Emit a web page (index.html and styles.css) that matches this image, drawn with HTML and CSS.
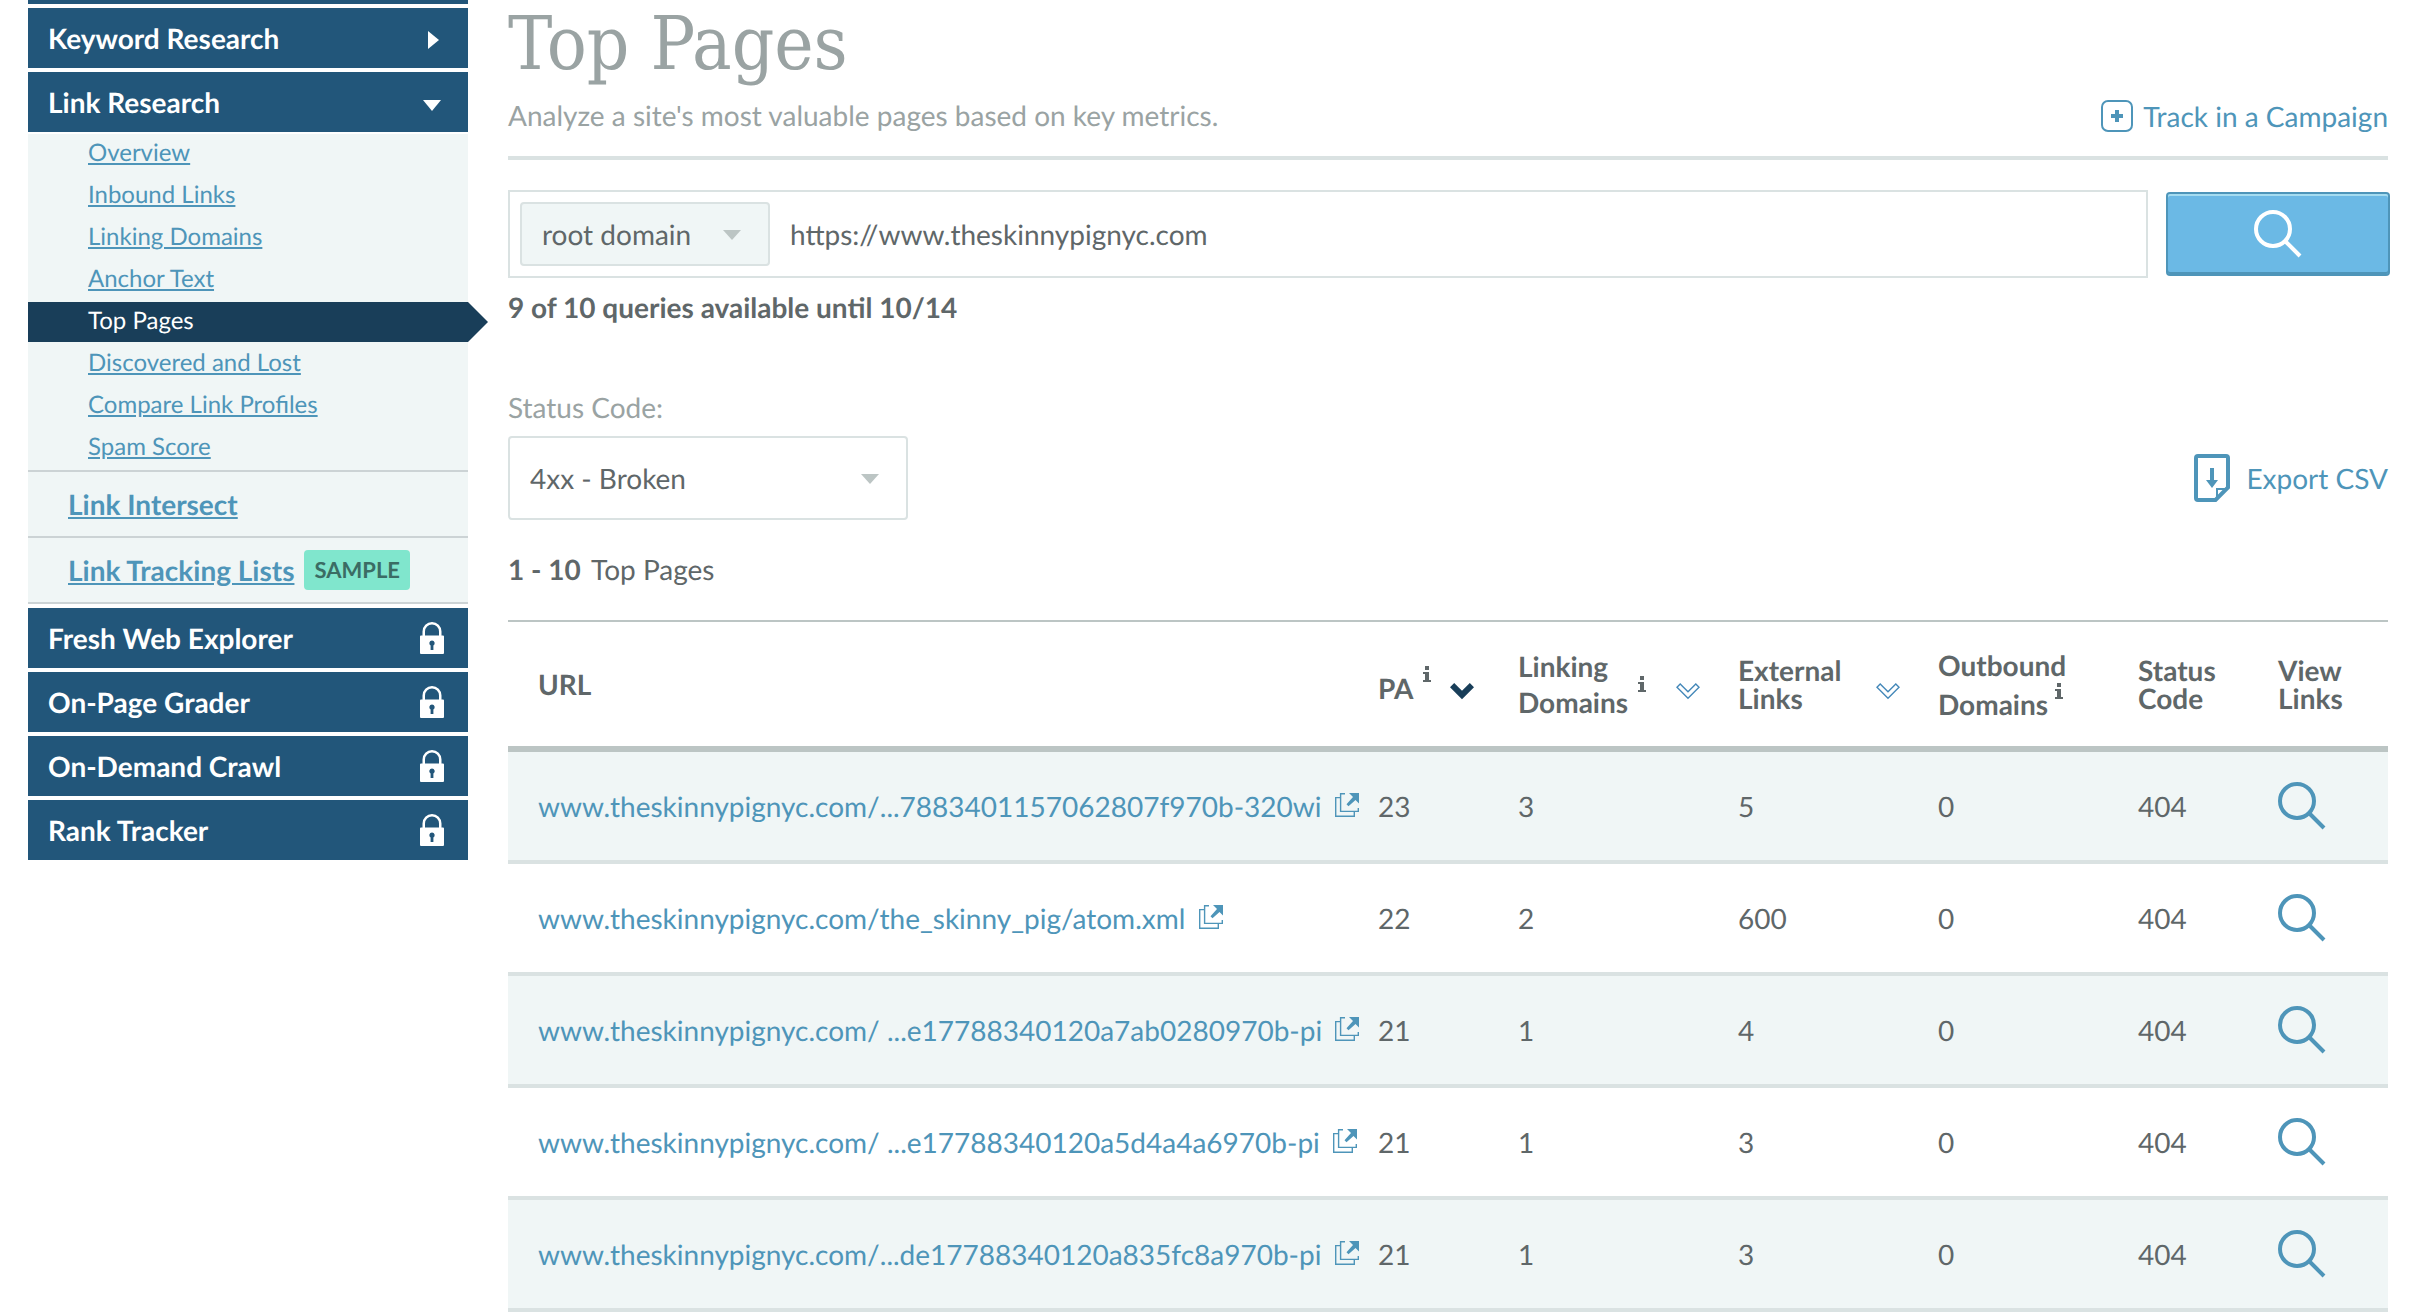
FILE: index.html
```
<!DOCTYPE html>
<html lang="en">
<head>
  <title>Top Pages</title>
  <meta charset="UTF-8">
  <link rel="stylesheet" href="styles.css">
</head>
<body>
<!-- icons shared by the page -->
<svg class="sprite" aria-hidden="true">
  <symbol id="lock" viewBox="0 0 24 32">
    <path fill-rule="evenodd" d="M1 13.500H2.500V9.500a9.500 9.500 0 0 1 19 0v4H23a1 1 0 0 1 1 1V31a1 1 0 0 1-1 1H1a1 1 0 0 1-1-1V14.500a1 1 0 0 1 1-1zM5 13.500h14V9.500a7 7 0 0 0-14 0zM12 18.500a2.700 2.700 0 0 0-1.400 5V28h2.800v-4.500a2.700 2.700 0 0 0-1.400-5z" fill="currentColor"/>
  </symbol>
  <symbol id="search" viewBox="0 0 48 48">
    <circle cx="19" cy="19" r="17" fill="none" stroke="currentColor" stroke-width="4"/>
    <path d="M31 31l15 15" stroke="currentColor" stroke-width="4"/>
  </symbol>
  <symbol id="external" viewBox="0 0 24 24">
    <path d="M5 4.600H.7v18.700h18.600V19M10 .7H5.600v17.700h17.700V15" fill="none" stroke="currentColor" stroke-width="1.400"/>
    <path d="M14 0h10v10.500l-3.500-3.500-7 6.200-2-2 6.500-7.200z" fill="currentColor"/>
  </symbol>
  <symbol id="info" viewBox="0 0 8 16">
    <path d="M2 0h4v4H2zM0 6h6v8h2v2H0v-2h2V8H0z" fill="currentColor"/>
  </symbol>
  <symbol id="chevron" viewBox="0 0 24 17">
    <path d="M1 4.200l3.200-3.200 7.800 7.800 7.800-7.800 3.200 3.200-11 11z" stroke="currentColor" stroke-width="1.400"/>
  </symbol>
</svg>

<div class="page">
  <nav class="sidebar">
    <div class="nav-stub"></div>
    <a class="nav-head" href="#">Keyword Research <span class="arrow-right"></span></a>
    <a class="nav-head nav-open" href="#">Link Research <span class="arrow-down"></span></a>
    <ul class="submenu">
      <li><a href="#">Overview</a></li>
      <li><a href="#">Inbound Links</a></li>
      <li><a href="#">Linking Domains</a></li>
      <li><a href="#">Anchor Text</a></li>
      <li class="current"><a href="#">Top Pages</a></li>
      <li><a href="#">Discovered and Lost</a></li>
      <li><a href="#">Compare Link Profiles</a></li>
      <li><a href="#">Spam Score</a></li>
    </ul>
    <div class="nav-sub"><a href="#">Link Intersect</a></div>
    <div class="nav-sub nav-last"><a href="#">Link Tracking Lists</a><span class="badge">SAMPLE</span></div>
    <a class="nav-head" href="#">Fresh Web Explorer <svg class="lock"><use href="#lock"/></svg></a>
    <a class="nav-head" href="#">On-Page Grader <svg class="lock"><use href="#lock"/></svg></a>
    <a class="nav-head" href="#">On-Demand Crawl <svg class="lock"><use href="#lock"/></svg></a>
    <a class="nav-head" href="#">Rank Tracker <svg class="lock"><use href="#lock"/></svg></a>
  </nav>

  <main class="main">
    <h1>Top Pages</h1>
    <div class="intro">
      <p>Analyze a site's most valuable pages based on key metrics.</p>
      <a class="track" href="#">
        <svg class="plus" viewBox="0 0 32 32">
          <rect x="1" y="1" width="30" height="30" rx="6" fill="none" stroke="currentColor" stroke-width="2"/>
          <path d="M14 10h4v4h4v4h-4v4h-4v-4h-4v-4h4z" fill="currentColor"/>
        </svg>
        Track in a Campaign
      </a>
    </div>

    <form class="search">
      <div class="search-box">
        <div class="select scope">
          <select aria-label="Scope"><option>root domain</option></select>
        </div>
        <input type="text" aria-label="Site" value="https://www.theskinnypignyc.com">
      </div>
      <button type="button" aria-label="Search"><svg class="glass"><use href="#search"/></svg></button>
    </form>
    <p class="queries">9 of 10 queries available until 10/14</p>

    <label class="status-label" for="status">Status Code:</label>
    <div class="filters">
      <div class="select status">
        <select id="status"><option>4xx - Broken</option></select>
      </div>
      <a class="export" href="#">
        <svg class="file" viewBox="0 0 36 48">
          <path d="M4 2h28a2 2 0 0 1 2 2v29.500L21.500 46H4a2 2 0 0 1-2-2V4a2 2 0 0 1 2-2z" fill="none" stroke="currentColor" stroke-width="4"/>
          <path d="M16 14h4v12h4l-6 8-6-8h4z" fill="currentColor"/>
          <path d="M23 44v-9h10" fill="none" stroke="currentColor" stroke-width="2"/>
        </svg>
        Export CSV
      </a>
    </div>
    <p class="count"><b>1 - 10</b> Top Pages</p>

    <table>
      <thead>
        <tr>
          <th class="col-url">URL</th>
          <th class="col-pa"><span class="th">PA <svg class="info"><use href="#info"/></svg><svg class="chevron sorted"><use href="#chevron"/></svg></span></th>
          <th class="col-linking"><span class="th"><span class="loose">Linking<br>Domains</span> <svg class="info low"><use href="#info"/></svg><svg class="chevron"><use href="#chevron"/></svg></span></th>
          <th class="col-external"><span class="th">External<br>Links <svg class="chevron"><use href="#chevron"/></svg></span></th>
          <th class="col-outbound"><span class="loose">Outbound<br>Domains <svg class="info"><use href="#info"/></svg></span></th>
          <th class="col-status">Status<br>Code</th>
          <th class="col-view">View<br>Links</th>
        </tr>
      </thead>
      <tbody>
        <tr>
          <td><a href="#">www.theskinnypignyc.com/...7883401157062807f970b-320wi <svg class="external"><use href="#external"/></svg></a></td>
          <td>23</td><td>3</td><td>5</td><td>0</td><td>404</td>
          <td><a href="#" aria-label="View links"><svg class="glass"><use href="#search"/></svg></a></td>
        </tr>
        <tr>
          <td><a href="#">www.theskinnypignyc.com/the_skinny_pig/atom.xml <svg class="external"><use href="#external"/></svg></a></td>
          <td>22</td><td>2</td><td>600</td><td>0</td><td>404</td>
          <td><a href="#" aria-label="View links"><svg class="glass"><use href="#search"/></svg></a></td>
        </tr>
        <tr>
          <td><a href="#">www.theskinnypignyc.com/ ...e17788340120a7ab0280970b-pi <svg class="external"><use href="#external"/></svg></a></td>
          <td>21</td><td>1</td><td>4</td><td>0</td><td>404</td>
          <td><a href="#" aria-label="View links"><svg class="glass"><use href="#search"/></svg></a></td>
        </tr>
        <tr>
          <td><a href="#">www.theskinnypignyc.com/ ...e17788340120a5d4a4a6970b-pi <svg class="external"><use href="#external"/></svg></a></td>
          <td>21</td><td>1</td><td>3</td><td>0</td><td>404</td>
          <td><a href="#" aria-label="View links"><svg class="glass"><use href="#search"/></svg></a></td>
        </tr>
        <tr>
          <td><a href="#">www.theskinnypignyc.com/...de17788340120a835fc8a970b-pi <svg class="external"><use href="#external"/></svg></a></td>
          <td>21</td><td>1</td><td>3</td><td>0</td><td>404</td>
          <td><a href="#" aria-label="View links"><svg class="glass"><use href="#search"/></svg></a></td>
        </tr>
      </tbody>
    </table>
  </main>
</div>
</body>
</html>
```
FILE: styles.css
```
:root {
  --blue: #4e95b9;
  --navy: #22567a;
  --text: #5f6769;
  --muted: #9aa3a3;
  --line: #dae2e2;
  --line-dark: #bcc5c4;
  --pale: #f0f6f6;
}

* {
  box-sizing: border-box;
}

body {
  margin: 0;
  font-family: Lato, sans-serif;
  font-size: 28px;
  line-height: 38px;
  color: var(--text);
  text-rendering: geometricPrecision;
}

a {
  color: var(--blue);
  text-decoration: none;
}

p,
h1 {
  margin: 0;
}

svg {
  flex: none;
}

.sprite {
  position: absolute;
  width: 0;
  height: 0;
}

.page {
  display: grid;
  grid-template-columns: 440px 1fr;
  gap: 40px;
  padding: 0 30px 0 28px;
}

/* sidebar */

.nav-stub {
  height: 4px;
  margin-bottom: 4px;
  background: var(--navy);
}

.nav-head {
  display: flex;
  align-items: center;
  justify-content: space-between;
  height: 60px;
  margin-bottom: 4px;
  padding: 0 24px 0 20px;
  background: var(--navy);
  color: #fff;
  font-weight: bold;
}

.nav-open {
  margin-bottom: 2px;
}

.arrow-right {
  margin: 4px 5px 0 0;
  border-left: 11px solid #fff;
  border-top: 9px solid transparent;
  border-bottom: 9px solid transparent;
}

.arrow-down {
  margin: 6px 3px 0 0;
  border-top: 11px solid #fff;
  border-left: 9px solid transparent;
  border-right: 9px solid transparent;
}

.lock {
  width: 24px;
  height: 32px;
}

.submenu {
  margin: 0;
  padding: 0;
  list-style: none;
  background: var(--pale);
  font-size: 24px;
}

.submenu li {
  height: 40px;
  margin-bottom: 2px;
  padding-left: 60px;
}

.submenu li:last-child {
  margin-bottom: 0;
  height: 42px;
}

.submenu a,
.nav-sub a {
  text-decoration: underline;
}

.submenu .current {
  position: relative;
  background: #193e59;
}

.submenu .current a {
  color: #fff;
  text-decoration: none;
}

.current::after {
  content: "";
  position: absolute;
  top: 0;
  left: 100%;
  border-left: 20px solid #193e59;
  border-top: 20px solid transparent;
  border-bottom: 20px solid transparent;
}

.nav-sub {
  display: flex;
  align-items: center;
  gap: 10px;
  height: 66px;
  padding-left: 40px;
  border-top: 2px solid #ccd3d5;
  background: var(--pale);
  font-weight: bold;
}

.nav-last {
  height: 68px;
  margin-bottom: 4px;
  border-bottom: 2px solid #ccd3d5;
}

.badge {
  padding: 0 10px;
  border-radius: 4px;
  background: #80e6cd;
  color: #3b6c64;
  font-size: 22px;
  line-height: 40px;
}

/* main */

h1 {
  height: 96px;
  font-family: "DejaVu Serif Condensed", "DejaVu Serif", serif;
  font-size: 74px;
  font-weight: normal;
  line-height: 88px;
  color: var(--muted);
}

.intro {
  display: flex;
  justify-content: space-between;
  height: 64px;
  border-bottom: 4px solid var(--line);
  color: var(--muted);
}

.track,
.export {
  display: flex;
  align-items: center;
  height: 40px;
}

.plus {
  width: 32px;
  height: 32px;
  margin-right: 10px;
}

.search {
  display: flex;
  align-items: center;
  gap: 20px;
  margin-top: 30px;
}

.search-box {
  display: flex;
  flex: 1;
  align-items: center;
  height: 88px;
  padding-left: 10px;
  border: 2px solid var(--line);
}

.search-box input {
  flex: 1;
  height: 80px;
  padding: 0 20px;
  border: 0;
  background: none;
  color: var(--text);
  font: inherit;
  text-rendering: inherit;
}

.search button {
  width: 220px;
  height: 80px;
  padding: 0;
  border: 0;
  border-radius: 2px;
  background: #6bb9e5;
  box-shadow: 0 0 0 2px var(--blue), inset 0 2px #a5dcf0, inset 0 -2px var(--blue);
  color: #fff;
}

.glass {
  display: block;
  width: 48px;
  height: 48px;
}

.search .glass {
  margin: 0 auto;
}

.select {
  position: relative;
}

.select select {
  width: 100%;
  height: 100%;
  padding: 0 20px;
  border: 2px solid var(--line);
  border-radius: 4px;
  appearance: none;
  background: #fff;
  color: var(--text);
  font: inherit;
  text-rendering: inherit;
}

.select::after {
  content: "";
  position: absolute;
  top: 50%;
  right: 29px;
  margin-top: -4px;
  border-top: 10px solid var(--line-dark);
  border-left: 9px solid transparent;
  border-right: 9px solid transparent;
  pointer-events: none;
}

.scope {
  width: 250px;
  height: 64px;
}

.select.scope select {
  background: var(--pale);
}

.status {
  width: 400px;
  height: 84px;
}

.queries {
  margin: 10px 0 62px;
  font-weight: bold;
}

.status-label {
  display: block;
  margin-bottom: 10px;
  color: var(--muted);
}

.filters {
  display: flex;
  align-items: center;
  justify-content: space-between;
}

.file {
  width: 36px;
  height: 48px;
  margin-right: 16px;
}

.count {
  margin: 30px 0 32px;
}

.count b {
  margin-right: 4px;
}

/* table */

table {
  width: 100%;
  border-collapse: separate;
  border-spacing: 0;
  border-top: 2px solid var(--line-dark);
  table-layout: fixed;
}

th,
td {
  padding: 0 0 0 20px;
  text-align: left;
  white-space: nowrap;
}

th:first-child,
td:first-child {
  padding-left: 30px;
}

th {
  height: 130px;
  border-bottom: 6px solid var(--line-dark);
  line-height: 28px;
}

td {
  height: 112px;
  border-bottom: 4px solid var(--line);
}

tbody tr:nth-child(odd) {
  background: var(--pale);
}

.col-pa,
.col-status {
  width: 140px;
}

.col-pa {
  padding-top: 8px;
}

.col-linking {
  width: 220px;
}

.col-external,
.col-outbound {
  width: 200px;
}

.col-view {
  width: 130px;
}

.th {
  display: flex;
  align-items: center;
}

.loose {
  line-height: 36px;
}

.info {
  width: 8px;
  height: 16px;
  margin: 0 0 28px 10px;
}

.low {
  margin-bottom: 0;
}

.loose .info {
  margin: 0;
  vertical-align: 16px;
}

.chevron {
  width: 24px;
  height: 17px;
  margin: 14px 18px 0 auto;
  fill: none;
  color: #4488b9;
}

.chevron.sorted {
  margin: 6px 24px 0 auto;
  fill: #193e59;
  color: #193e59;
}

.external {
  width: 24px;
  height: 24px;
  margin-left: 6px;
}
```
